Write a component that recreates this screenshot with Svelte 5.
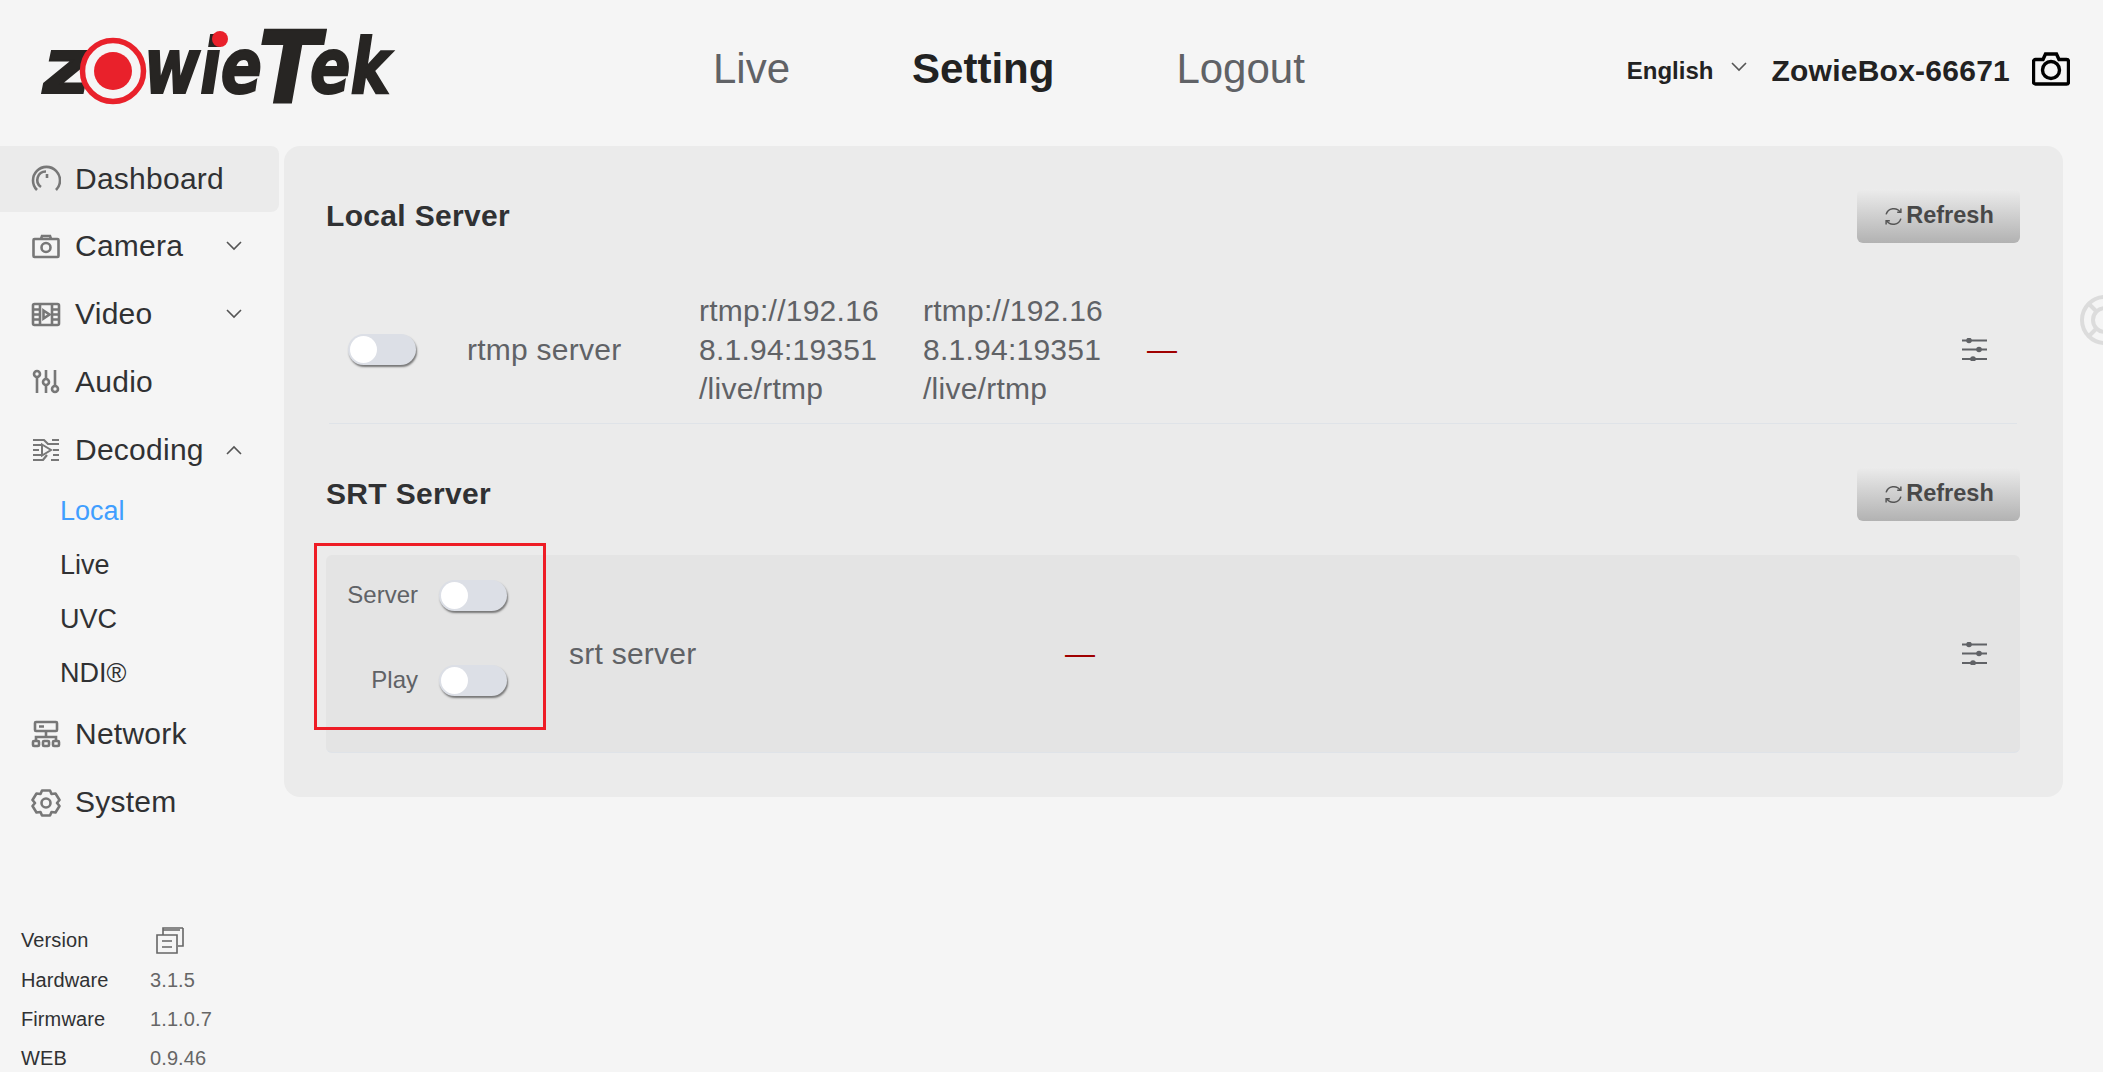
<script>
	const nav = [
		{ id: 'dashboard', label: 'Dashboard', active: true },
		{ id: 'camera', label: 'Camera', caret: 'down' },
		{ id: 'video', label: 'Video', caret: 'down' },
		{ id: 'audio', label: 'Audio' },
		{ id: 'decoding', label: 'Decoding', caret: 'up', subs: ['Local', 'Live', 'UVC', 'NDI®'] },
		{ id: 'network', label: 'Network' },
		{ id: 'system', label: 'System' }
	];
	const versions = [
		['Hardware', '3.1.5'],
		['Firmware', '1.1.0.7'],
		['WEB', '0.9.46']
	];
	const rtmpUrl = ['rtmp://192.16', '8.1.94:19351', '/live/rtmp'];
</script>

{#snippet caret(dir)}
	<svg class="caret" viewBox="0 0 16 10" width="16" height="10">
		{#if dir === 'up'}
			<path d="M1 9l7-7 7 7" />
		{:else}
			<path d="M1 1l7 7 7-7" />
		{/if}
	</svg>
{/snippet}

{#snippet navIcon(id)}
	<svg class="nav-icon" viewBox="0 0 30 30" width="30" height="30">
		{#if id === 'dashboard'}
			<path d="M6 26A13.500 13.500 0 1 1 25 26" />
			<path d="M10 23A8.500 8.500 0 0 1 15 7.500" />
			<path d="M16 10v4" />
		{:else if id === 'camera'}
			<path d="M3.500 8h23a1 1 0 0 1 1 1v16a1 1 0 0 1-1 1h-23a1 1 0 0 1-1-1V9a1 1 0 0 1 1-1z" />
			<path d="M10 8l1-3h8l1 3" />
			<circle cx="15" cy="16.500" r="4.500" />
		{:else if id === 'video'}
			<rect x="2" y="5" width="26" height="21" rx="1.500" />
			<path d="M9 5v21M21 5v21M2 10.500h7M2 15.500h7M2 20.500h7M21 10.500h7M21 15.500h7M21 20.500h7" />
			<path d="M12.500 11.500l6 4-6 4z" />
		{:else if id === 'audio'}
			<path d="M6 10v16M15 3v9M15 18v8M24 3v16M6 3v1M24 25v1" />
			<circle cx="6" cy="7" r="3" />
			<circle cx="15" cy="15" r="3" />
			<circle cx="24" cy="22" r="3" />
		{:else if id === 'decoding'}
			<path d="M2 5h11l4 4h11M2 10h8M2 15h6M2 20h8M2 25h10l4-5M22 15h6M22 20h6M20 25h8M21 5h7" stroke-width="2.200" />
			<path d="M11 9.500l9 5.500-9 5.500z" stroke-width="2" />
		{:else if id === 'network'}
			<rect x="4" y="3" width="22" height="9" rx="1" />
			<path d="M8 7.500h5M15 12v6M5 22v-4h20v4" />
			<rect x="2" y="22" width="6" height="5" rx="1" />
			<rect x="12" y="22" width="6" height="5" rx="1" />
			<rect x="22" y="22" width="6" height="5" rx="1" />
		{:else if id === 'system'}
			<path d="M11 3.500h8l1.500 3.500 4-.5 4 6.500-2.500 3 2.500 3-4 6.500-4-.5-1.500 3.500h-8l-1.500-3.500-4 .5-4-6.500 2.500-3-2.500-3 4-6.500 4 .5z" stroke-linejoin="round" />
			<circle cx="15" cy="16" r="4.500" />
		{/if}
	</svg>
{/snippet}

{#snippet toggle()}
	<span class="toggle"><span class="knob"></span></span>
{/snippet}

{#snippet tune()}
	<svg class="tune" viewBox="0 0 25 23" width="25" height="23">
		<path d="M0 2.500h25M0 11.500h25M0 21h25" />
		<circle cx="7" cy="2.500" r="2.800" />
		<circle cx="17" cy="11.500" r="2.800" />
		<circle cx="11" cy="21" r="2.800" />
	</svg>
{/snippet}

{#snippet refresh()}
	<button class="refresh">
		<svg viewBox="0 0 18 18" width="19" height="19">
			<path d="M2 7A7.500 7.500 0 0 1 15.500 5M16 11A7.500 7.500 0 0 1 2.500 13" />
			<path d="M16 1.500V5h-3.500M2 16.500V13h3.500" />
		</svg>
		<span>Refresh</span>
	</button>
{/snippet}

{#snippet urlCell()}
	<span class="url">
		{#each rtmpUrl as line}
			<span class="url-line">{line}</span>
		{/each}
	</span>
{/snippet}

<div class="page">
	<header class="top">
		<div class="logo">
			<svg viewBox="0 0 354 76" width="354" height="76">
				<text class="mark" x="3" y="62" font-size="76" textLength="48" lengthAdjust="spacingAndGlyphs">z</text>
				<text class="mark" x="104" y="62" font-size="76" textLength="118" lengthAdjust="spacingAndGlyphs">wie</text>
				<text class="mark" x="270" y="62" font-size="76" textLength="80" lengthAdjust="spacingAndGlyphs">ek</text>
				<text class="mark" x="218" y="72" font-size="100" textLength="62" lengthAdjust="spacingAndGlyphs">T</text>
				<circle cx="73" cy="40" r="30.500" fill="#f5f5f5" stroke="#e9212b" stroke-width="5.500" />
				<circle cx="73" cy="40" r="19" fill="#e9212b" />
				<circle cx="180" cy="8" r="8" fill="#e9212b" />
			</svg>
		</div>
		<nav class="main-nav">
			<span>Live</span>
			<span class="current">Setting</span>
			<span>Logout</span>
		</nav>
		<div class="top-right">
			<span class="lang">English</span>
			{@render caret('down')}
			<span class="device">ZowieBox-66671</span>
			<svg class="snap" viewBox="0 0 38 34" width="38" height="34">
				<path d="M3.500 7.500H11l2.500-5.500h11L27 7.500h7.500a2 2 0 0 1 2 2V30a2 2 0 0 1-2 2h-31a2 2 0 0 1-2-2V9.500a2 2 0 0 1 2-2z" />
				<circle cx="19" cy="18" r="8.500" />
			</svg>
		</div>
	</header>

	<div class="body">
		<aside class="side">
			{#each nav as item}
				<div class="item" class:active={item.active}>
					{@render navIcon(item.id)}
					<span class="label">{item.label}</span>
					{#if item.caret}{@render caret(item.caret)}{/if}
				</div>
				{#if item.subs}
					{#each item.subs as sub, i}
						<div class="sub" class:on={i === 0}>{sub}</div>
					{/each}
				{/if}
			{/each}

			<div class="versions">
				<div class="ver">
					<span class="ver-key">Version</span>
					<svg class="copy" viewBox="0 0 28 27" width="28" height="27">
						<path d="M1 8h20v18H1zM7 8V3h17M27 1v18h-5M6 14h10M6 20h10M7 3V1h20" />
					</svg>
				</div>
				{#each versions as [key, value]}
					<div class="ver"><span class="ver-key">{key}</span><span class="ver-val">{value}</span></div>
				{/each}
			</div>
		</aside>

		<main class="panel">
			<div class="head">
				<h2>Local Server</h2>
				{@render refresh()}
			</div>
			<div class="rtmp-row">
				{@render toggle()}
				<span class="name">rtmp server</span>
				{@render urlCell()}
				{@render urlCell()}
				<span class="dash">—</span>
				{@render tune()}
			</div>

			<div class="head second">
				<h2>SRT Server</h2>
				{@render refresh()}
			</div>
			<div class="srt-row">
				<div class="switches">
					<div class="sw"><span>Server</span>{@render toggle()}</div>
					<div class="sw"><span>Play</span>{@render toggle()}</div>
				</div>
				<span class="name srt-name">srt server</span>
				<span class="dash">—</span>
				{@render tune()}
				<div class="highlight"></div>
			</div>
		</main>
	</div>

	<svg class="help" viewBox="0 0 50 50" width="50" height="50">
		<circle cx="25" cy="25" r="23" />
		<circle cx="25" cy="25" r="12" />
		<path d="M9 9l8 8M9 41l8-8" />
	</svg>
</div>

<style>
	:global(body) {
		margin: 0;
		background: #f5f5f5;
	}
	.page {
		position: relative;
		width: 2103px;
		height: 1072px;
		overflow: hidden;
		font-family: 'Liberation Sans', Arial, sans-serif;
		color: #333;
		background: #f5f5f5;
	}
	.top {
		display: flex;
		align-items: center;
		height: 146px;
		padding: 0 33px 0 40px;
		box-sizing: border-box;
	}
	.logo {
		width: 354px;
		height: 76px;
		margin-top: -8px;
	}
	.logo svg {
		display: block;
		overflow: visible;
	}
	.mark {
		font-family: 'DejaVu Sans', sans-serif;
		font-weight: 700;
		font-style: italic;
		fill: #272523;
		stroke: #272523;
		stroke-width: 2px;
	}
	.main-nav {
		display: flex;
		gap: 122px;
		margin: -8px 0 0 319px;
		font-size: 42px;
		color: #606266;
	}
	.current {
		font-weight: 700;
		color: #222;
	}
	.top-right {
		display: flex;
		align-items: center;
		margin: -4px 0 0 auto;
		color: #222;
		font-weight: 700;
	}
	.lang {
		font-size: 24px;
		margin-right: 18px;
	}
	.top-right .caret {
		margin: -8px 24px 0 0;
	}
	.device {
		font-size: 30px;
		letter-spacing: 0.25px;
		margin-right: 22px;
	}
	.snap {
		margin-top: -4px;
		fill: none;
		stroke: #000;
		stroke-width: 3.4;
	}
	.body {
		display: grid;
		grid-template-columns: 279px 1779px;
		column-gap: 5px;
		align-items: start;
	}
	.item {
		display: flex;
		align-items: center;
		height: 68px;
		padding-left: 31px;
		font-size: 30px;
		letter-spacing: 0.25px;
		color: #303133;
		box-sizing: border-box;
	}
	.item.active {
		height: 66px;
		background: #ebebeb;
		border-radius: 0 8px 8px 0;
	}
	.nav-icon {
		flex: none;
		fill: none;
		stroke: #777;
		stroke-width: 2.6;
		margin-right: 14px;
	}
	.label {
		flex: 1;
	}
	.caret {
		flex: none;
		fill: none;
		stroke: #555;
		stroke-width: 1.6;
	}
	.item .caret {
		margin-right: 37px;
	}
	.sub {
		height: 54px;
		line-height: 54px;
		padding-left: 60px;
		font-size: 27px;
		color: #303133;
	}
	.sub.on {
		color: #409eff;
	}
	.versions {
		margin-top: 85px;
		padding-left: 21px;
		font-size: 20px;
		letter-spacing: 0.1px;
	}
	.ver {
		display: flex;
		align-items: center;
		height: 39px;
	}
	.ver:first-child {
		margin-bottom: 1px;
	}
	.ver-key {
		width: 129px;
		color: #303133;
	}
	.ver-val {
		color: #666;
	}
	.copy {
		margin-left: 6px;
		fill: none;
		stroke: #666;
		stroke-width: 1.6;
	}
	.panel {
		background: #ebebeb;
		border-radius: 16px;
		padding: 43px 43px 43px 42px;
		min-height: 565px;
	}
	.head {
		display: flex;
		align-items: center;
		justify-content: space-between;
		height: 54px;
	}
	.head.second {
		margin-top: 43px;
	}
	h2 {
		margin: 0;
		font-size: 30px;
		font-weight: 700;
		letter-spacing: 0.33px;
		color: #303133;
	}
	.refresh {
		display: flex;
		align-items: center;
		justify-content: center;
		gap: 3px;
		width: 163px;
		height: 54px;
		padding: 0 0 0 1px;
		border: 0;
		border-radius: 6px;
		background: linear-gradient(#ececec, #b2b2b2);
		font: 700 23.5px 'Liberation Sans', Arial, sans-serif;
		color: #484848;
	}
	.refresh span {
		margin-top: -2px;
	}
	.refresh svg {
		fill: none;
		stroke: #555;
		stroke-width: 1.4;
	}
	.rtmp-row {
		display: flex;
		align-items: center;
		height: 148px;
		margin: 33px 3px 0;
		padding: 0 30px 0 19px;
		border-bottom: 1px solid #dfe3e8;
		box-sizing: border-box;
		font-size: 30px;
		letter-spacing: 0.25px;
		color: #606266;
	}
	.rtmp-row .name {
		width: 232px;
		margin-left: 51px;
	}
	.url {
		width: 224px;
		line-height: 39px;
	}
	.url-line {
		display: block;
		white-space: nowrap;
	}
	.dash {
		color: #a00000;
		font-size: 30px;
	}
	.tune {
		margin-left: auto;
		fill: #606266;
		stroke: #606266;
		stroke-width: 1.8;
	}
	.tune circle {
		stroke: none;
	}
	.srt-row {
		position: relative;
		display: flex;
		align-items: center;
		height: 198px;
		margin-top: 34px;
		padding-right: 33px;
		background: #e4e4e4;
		border-radius: 6px;
		border-bottom: 1px solid #dfe3e8;
		box-sizing: border-box;
		font-size: 30px;
		letter-spacing: 0.25px;
		color: #606266;
	}
	.switches {
		display: flex;
		flex-direction: column;
		gap: 54px;
		width: 243px;
		margin-top: -32px;
	}
	.sw {
		display: flex;
		align-items: center;
		justify-content: flex-end;
		gap: 21px;
		width: 181px;
		font-size: 24px;
		letter-spacing: 0;
	}
	.srt-name {
		width: 496px;
	}
	.toggle {
		position: relative;
		display: block;
		flex: none;
		width: 68px;
		height: 31px;
		border-radius: 16px;
		background: #dcdfe6;
		box-shadow: 1px 2px 2px #777;
	}
	.knob {
		position: absolute;
		left: 2px;
		top: 2px;
		width: 27px;
		height: 27px;
		border-radius: 50%;
		background: #fff;
	}
	.highlight {
		position: absolute;
		left: -12px;
		top: -12px;
		width: 232px;
		height: 187px;
		border: 3px solid #ee1c25;
		box-sizing: border-box;
	}
	.help {
		position: absolute;
		left: 2080px;
		top: 295px;
		fill: none;
		stroke: #dcdcdc;
		stroke-width: 4;
	}
</style>
